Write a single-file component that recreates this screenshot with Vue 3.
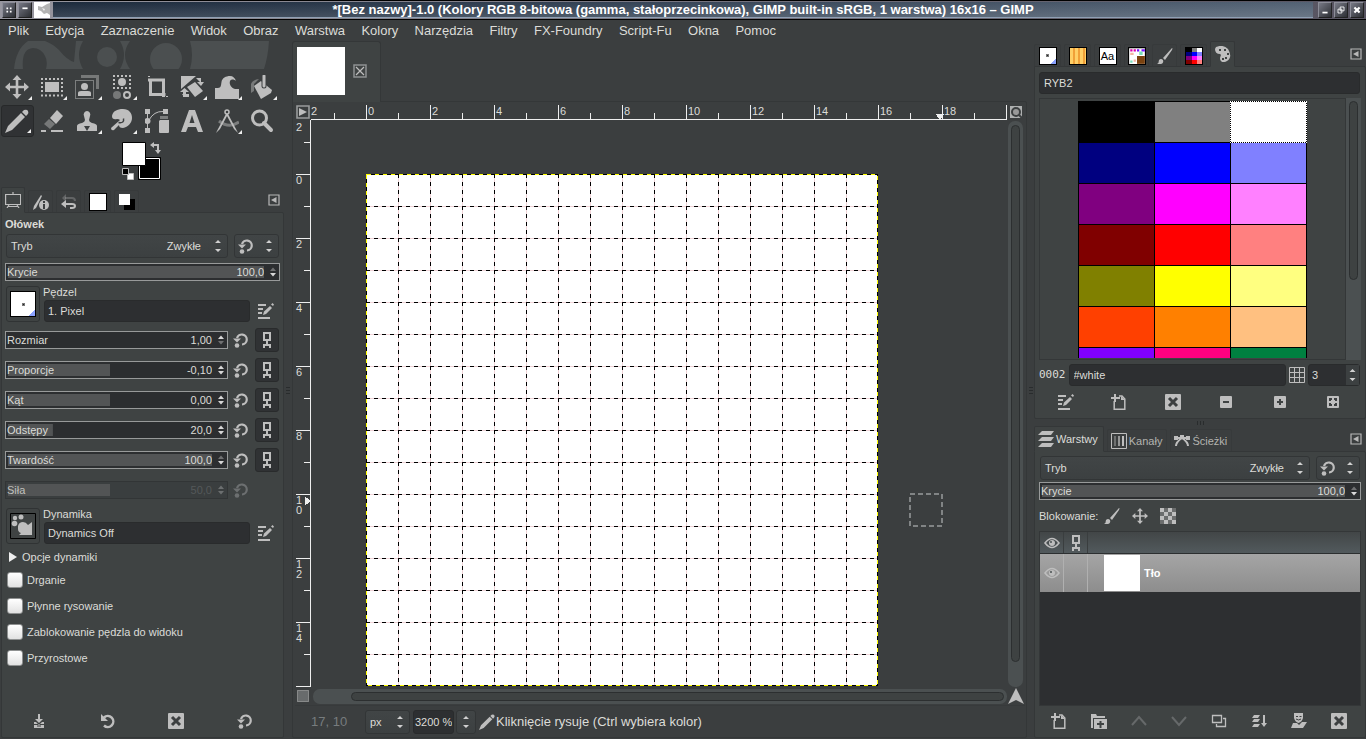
<script setup>
const menus = ['Plik', 'Edycja', 'Zaznaczenie', 'Widok', 'Obraz', 'Warstwa', 'Kolory', 'Narzędzia', 'Filtry', 'FX-Foundry', 'Script-Fu', 'Okna', 'Pomoc']

const tools = [
  { id: 'move', name: 'Przesunięcie', more: true },
  { id: 'rect', name: 'Zaznaczenie prostokątne', more: true },
  { id: 'fore', name: 'Zaznaczenie pierwszoplanowe', more: true },
  { id: 'bycolor', name: 'Zaznaczenie według koloru', more: true },
  { id: 'crop', name: 'Kadrowanie', more: false },
  { id: 'transform', name: 'Przekształcenie', more: true },
  { id: 'warp', name: 'Wypaczanie', more: true },
  { id: 'bucket', name: 'Wypełnienie kubełkiem', more: true },
  { id: 'pencil', name: 'Ołówek', more: true, active: true },
  { id: 'eraser', name: 'Gumka', more: false },
  { id: 'clone', name: 'Klonowanie', more: true },
  { id: 'smudge', name: 'Rozsmarowywanie', more: true },
  { id: 'paths', name: 'Ścieżki', more: false },
  { id: 'text', name: 'Tekst', more: false },
  { id: 'measure', name: 'Miarka', more: true },
  { id: 'zoom', name: 'Powiększenie', more: false },
]

const sliders = [
  { id: 'size', name: 'Rozmiar', value: '1,00', fill: 0, dim: 'dimdown' },
  { id: 'aspect', name: 'Proporcje', value: '-0,10', fill: 50 },
  { id: 'angle', name: 'Kąt', value: '0,00', fill: 50 },
  { id: 'spacing', name: 'Odstępy', value: '20,0', fill: 22 },
  { id: 'hardness', name: 'Twardość', value: '100,0', fill: 100, dim: 'dimup' },
  { id: 'force', name: 'Siła', value: '50,0', fill: 50, disabled: true },
]

const checks = ['Drganie', 'Płynne rysowanie', 'Zablokowanie pędzla do widoku', 'Przyrostowe']

const swatches = [
  '#000000', '#808080', '#ffffff', '#000080', '#0000ff', '#8080ff', '#800080', '#ff00ff', '#ff80ff',
  '#800000', '#ff0000', '#ff8080', '#808000', '#ffff00', '#ffff80', '#ff4000', '#ff8000', '#ffc080',
  '#8000ff', '#ff0080', '#008040',
]

const leftFooter = ['save', 'revert', 'delete', 'reset']
const paletteFooter = ['edit', 'new', 'delete', 'minus', 'plus', 'fit']
const layerFooter = ['new', 'folder', 'up', 'down', 'duplicate', 'merge', 'mask', 'delete']

const cell = 32
const originX = 55
const originY = 54
const hTicks = Array.from({ length: 22 }, (_, i) => i - 1)
const vTicks = Array.from({ length: 18 }, (_, i) => i - 1)
const hLabels = [0, 2, 4, 6, 8, 10, 12, 14, 16, 18]
const vLabels = [0, 2, 4, 6, 8, 10, 12, 14]
const inner = Array.from({ length: 15 }, (_, i) => i + 1)
</script>

<template>
  <svg class="defs" aria-hidden="true">
    <symbol id="move" viewBox="0 0 24 24"><path d="M12 0l4.500 5H13.300v5.700H19V7.500l5 4.500-5 4.500v-3.200h-5.700V19h3.200L12 24l-4.500-5h3.200v-5.700H5v3.200L0 12l5-4.500v3.200h5.700V5H7.500z" /></symbol>
    <symbol id="rect" viewBox="0 0 24 24"><path d="M5 7h14v10H5z" /><path d="M1 4h22M1 20.500h22" stroke="currentColor" stroke-width="2" stroke-dasharray="2 2" fill="none" /><path d="M2 7v12M22 7v12" stroke="currentColor" stroke-width="2" stroke-dasharray="2 2" fill="none" /></symbol>
    <symbol id="fore" viewBox="0 0 24 24"><path d="M6 0h18v14h-3V3H6z" opacity=".45" /><rect x="0.500" y="5.500" width="18" height="18" fill="none" stroke="currentColor" stroke-dasharray="1 1" /><circle cx="9.500" cy="11.500" r="3.500" /><path d="M3 21v-3q0-2 3-2h7q3 0 3 2v3z" /></symbol>
    <symbol id="bycolor" viewBox="0 0 24 24"><path d="M3 1h18M3 13h18M4 4v8M20 4v8" fill="none" stroke="currentColor" stroke-width="2" stroke-dasharray="2 2" /><circle cx="12" cy="7" r="4" /><circle cx="7" cy="20" r="4" opacity=".45" /><circle cx="17" cy="20" r="3" fill="none" stroke="currentColor" stroke-width="2" /></symbol>
    <symbol id="crop" viewBox="0 0 24 24"><path d="M3 5h15.500v17M5.500 5v14.500h15" fill="none" stroke="currentColor" stroke-width="3" /><path d="M3 1h2v1H3zM21 21h2v1h-2z" /></symbol>
    <symbol id="transform" viewBox="0 0 24 24"><path d="M1 1h15L1 14zM7 12l8-5 8 9-8 6z" /><path d="M16 3h5v5M3 22v-5h-3l4.500-4L9 17H6v5" /><path d="M17 7h7l-3 4zM2 19h7v3H4z" /></symbol>
    <symbol id="warp" viewBox="0 0 24 24"><path d="M0 24V13h3c3 0 3-3 3.500-6C7 3 11 1 15 1c3 0 5 2 6 5-2-2-5-2-6 0-1 3 1 7 5 8h4v10z" /></symbol>
    <symbol id="bucket" viewBox="0 0 24 24"><path d="M1 18V9q1-4 8-5L4 9v7z" opacity=".45" /><path d="M11 6l11 9-1 3-10 6L4 11z" /><path d="M14 1v10" stroke="#3c3f40" stroke-width="5" stroke-linecap="round" /><path d="M14 1v10" stroke="currentColor" stroke-width="3" stroke-linecap="round" /></symbol>
    <symbol id="pencil" viewBox="0 0 24 24"><path d="M0 24l3-7L16 4l4 4L7 21zM17 3l2-2q3-1 4 1 1 2-.500 3.500L21 7z" /></symbol>
    <symbol id="eraser" viewBox="0 0 24 24"><path d="M17 1l6 6-7 8-6-6z" /><path d="M9 10l6 5-5 5-6-5z" opacity=".45" /><path d="M1 21h5v2H1zM11 21h12v2H11z" /></symbol>
    <symbol id="clone" viewBox="0 0 24 24"><path d="M12 2a3.500 3.500 0 0 1 3 5l-1 4q0 2 3 3 5 1 5 3v5H2v-5q0-2 5-3 3-1 3-3L9 7a3.500 3.500 0 0 1 3-5z" /><path d="M9 17h6l-3 5z" fill="#3c3f40" /></symbol>
    <symbol id="smudge" viewBox="0 0 24 24"><path d="M2 7C3 2 7 0 13 0c6 0 9 4 9 9 0 5-4 9-9 10-3 0-4-1-4-3l-5 5q-3 1-3-2l9-8q-1-1-3-1-5 1-5-3z" /><path d="M8.500 13.500q6 1 5-4" fill="none" stroke="#3c3f40" stroke-width="1.500" /></symbol>
    <symbol id="paths" viewBox="0 0 24 24"><path d="M0 0h5v5H0zM0 19h5v5H0zM18 0h5v5h-5zM15 11h9v12q0 1-1 1h-8q-1 0-1-1V12z" /><circle cx="2.500" cy="12" r="3" /><path d="M2.500 3v18M4 11Q9 2 18 2.500" fill="none" stroke="currentColor" /><path d="M15 7h8v3h-8z" opacity=".5" /></symbol>
    <symbol id="text" viewBox="0 0 24 24"><path fill-rule="evenodd" d="M1 23L9 1h6l8 22h-5l-2-5H8l-2 5zM9.500 14h5L12 6z" /></symbol>
    <symbol id="measure" viewBox="0 0 24 24"><circle cx="12" cy="3" r="2" fill="none" stroke="currentColor" stroke-width="1.500" /><path d="M11 5L3 20l-2 4 4-4 7-13 7 13 4 4-2-4-8-15z" /><path d="M4 12q10 8 20 1" fill="none" stroke="currentColor" stroke-width="3" opacity=".5" /></symbol>
    <symbol id="zoom" viewBox="0 0 24 24"><circle cx="9.500" cy="9" r="7" fill="none" stroke="currentColor" stroke-width="3" /><path d="M14 14l7 7" stroke="currentColor" stroke-width="4" stroke-linecap="round" /></symbol>
    <symbol id="reset" viewBox="0 0 16 16"><path d="M4 6A5 5 0 1 1 9 12.500" fill="none" stroke="currentColor" stroke-width="2.200" /><path d="M0 6.500h8L4 10.500z" /><circle cx="4" cy="13.500" r="2.300" /></symbol>
    <symbol id="revert" viewBox="0 0 16 16"><path d="M4 4.500A5.500 5.500 0 1 1 4 12.500" fill="none" stroke="currentColor" stroke-width="2.500" /><path d="M1 1v7h7z" /></symbol>
    <symbol id="save" viewBox="0 0 16 16"><path d="M7 1h2v5h3L8 10 4 6h3zM3 9h2l3 3 3-3h2v2H3zM3 12h10v3H3z" /><path d="M6 12.500h4v1H6z" fill="#3c3f40" /></symbol>
    <symbol id="delete" viewBox="0 0 16 16"><rect width="16" height="16" rx="1" /><path d="M4 4l8 8M12 4l-8 8" stroke="#3c3f40" stroke-width="3" /></symbol>
    <symbol id="chain" viewBox="0 0 16 16"><path d="M5 1h6v7H5zM8 8v4M5 16v-3h6v3" fill="none" stroke="currentColor" stroke-width="2" /></symbol>
    <symbol id="edit" viewBox="0 0 16 16"><path d="M0 1h8v2H0zM0 5h5v2H0zM0 9h4v2H0zM0 14h12v2H0zM5 12l1-3.500L12 3l2 2-6 6zM13 1.500L14.500 0 16 1.500 15 3z" /></symbol>
    <symbol id="new" viewBox="0 0 16 16"><path d="M3.200 7v8.200h10.600V5L11 2H8" fill="none" stroke="currentColor" stroke-width="1.500" /><path d="M3 0h2v3h4v2H5v3H3V5H0V3h3zM10 2l4 4h-4z" /></symbol>
    <symbol id="minus" viewBox="0 0 16 16"><path fill-rule="evenodd" d="M3 2h10q1 0 1 1v10q0 1-1 1H3q-1 0-1-1V3q0-1 1-1zM5 7v2h6V7z" /></symbol>
    <symbol id="plus" viewBox="0 0 16 16"><path fill-rule="evenodd" d="M3 2h10q1 0 1 1v10q0 1-1 1H3q-1 0-1-1V3q0-1 1-1zM7 5v2H5v2h2v2h2V9h2V7H9V5z" /></symbol>
    <symbol id="fit" viewBox="0 0 16 16"><rect x="2" y="2" width="12" height="12" rx="1" /><path d="M4 4h3v2H6v1H4zM9 4h3v3h-2V6H9zM4 9h2v1h1v2H4zM10 9h2v3H9v-2h1z" fill="#3c3f40" /></symbol>
    <symbol id="folder" viewBox="0 0 16 16"><path fill-rule="evenodd" d="M0 1h5l1 2h8v2H2v10H0zM3 6h13v10H3zM8.500 8v2H6v2h2.500v3h2v-3H13v-2h-2.500V8z" /></symbol>
    <symbol id="up" viewBox="0 0 16 16"><path d="M1 12l7-8 7 8" fill="none" stroke="#66696a" stroke-width="2" /></symbol>
    <symbol id="down" viewBox="0 0 16 16"><path d="M1 4l7 8 7-8" fill="none" stroke="#66696a" stroke-width="2" /></symbol>
    <symbol id="duplicate" viewBox="0 0 16 16"><path d="M1.500 2.500h9v7h-9zM12 5.500h2.500v8h-9V11" fill="none" stroke="currentColor" stroke-width="1.300" /></symbol>
    <symbol id="merge" viewBox="0 0 16 16"><path d="M3 2h6L7 5H1zM3 6h6L7 9H1zM3 11h6l-2 3H1zM12 2h2v8h2l-3 4-3-4h2z" /></symbol>
    <symbol id="mask" viewBox="0 0 16 16"><path d="M3 0h9v5q-1 4-4.500 5Q4 9 3 5zM2 10h4l2 2 3-3h5l-4 6H0z" /><path d="M5 3.500h2M8.500 3.500h2M5 6q2.500 2 5 0" stroke="#3c3f40" fill="none" /></symbol>
    <symbol id="brush" viewBox="0 0 16 16"><path d="M0 16q2-1 2-4 2-2 4 0 1 3-2 4zM6 10l9-10q1 0 0 2L8 12z" /></symbol>
    <symbol id="palette" viewBox="0 0 16 16"><path fill-rule="evenodd" d="M1 1q7-3 12 2 5 8-1 12-6 3-7-2c0-3 2-4 0-5Q0 8 0 3zM4 3v2h2V3zM9 3v2h2V3zM12 7v2h2V7zM10 11v2h2v-2zM7 12v2h2v-2z" /></symbol>
    <symbol id="toolopts" viewBox="0 0 16 16"><path d="M.600 2.500h15v10H.600zM8 0v2M4 13l-2 3M12 13l2 3M3 14.500h10" fill="none" stroke="currentColor" stroke-width="1.200" /></symbol>
    <symbol id="device" viewBox="0 0 16 16"><path d="M0 16l1-4L8 1l1 1-6 12z" /><circle cx="11" cy="11" r="5" /><path d="M10 7h2v2h-2zM10 10h2v5h-2z" fill="#3c3f40" /></symbol>
    <symbol id="undo" viewBox="0 0 16 16"><path d="M4 4h7q3 0 3 3" stroke="currentColor" stroke-width="2" fill="none" opacity=".3" /><path d="M5 0v8L1 4z" opacity=".3" /><path d="M5 6v8L0 10zM4 9h7q4 0 4 3t-4 3H9v-2h2q2 0 2-1t-2-1H4z" /></symbol>
    <symbol id="layers" viewBox="0 0 16 16"><path d="M4 0h12l-3 4H0zM4 6h12l-3 4H0zM4 12h12l-3 4H0z" /></symbol>
    <symbol id="channels" viewBox="0 0 16 16"><path d="M.500.500h15v15H.500z" fill="none" stroke="currentColor" /><path d="M3 3h2v10H3z" opacity=".4" /><path d="M7 3h2v10H7z" opacity=".7" /><path d="M11 3h2v10h-2z" /></symbol>
    <symbol id="vectors" viewBox="0 0 16 16"><path d="M0 3h4v4H0zM12 3h4v4h-4zM6 2h4v4H6z" /><path d="M0 5h16M2 13q0-4 6-8 6 4 6 8" fill="none" stroke="currentColor" stroke-width="2" /></symbol>
    <symbol id="eye" viewBox="0 0 16 16"><path d="M1 8q7-9 14 0-7 9-14 0z" fill="none" stroke="currentColor" stroke-width="1.600" /><circle cx="8" cy="8" r="3" /><circle cx="7" cy="7" r="1" fill="#4a5052" /></symbol>
    <symbol id="checker" viewBox="0 0 16 16"><path d="M0 0h16v16H0z" opacity=".35" /><path d="M0 0h4v4H0zM8 0h4v4H8zM4 4h4v4H4zM12 4h4v4h-4zM0 8h4v4H0zM8 8h4v4H8zM4 12h4v4H4zM12 12h4v4h-4z" /></symbol>
    <symbol id="table" viewBox="0 0 16 16"><path d="M.500.500h15v15H.500zM5.500 0v16M10.500 0v16M0 5.500h16M0 10.500h16" fill="none" stroke="currentColor" /></symbol>
    <symbol id="arrows" viewBox="0 0 8 14"><path d="M1 4l3-3 3 3zM1 10h6l-3 3z" /></symbol>
    <symbol id="steps" viewBox="0 0 8 12"><path class="stepup" d="M1 5l3-3.500L7 5z" /><path class="stepdown" d="M1 7h6l-3 3.500z" /></symbol>
    <symbol id="tabmenu" viewBox="0 0 12 12"><path d="M1 1h10v10H1z" fill="none" stroke="currentColor" stroke-width="1.200" /><path d="M8.500 3v6L3 6z" /></symbol>
  </svg>

  <div class="gimp">
    <header class="title">
      <div class="wm"><button aria-label="Menu okna"><svg viewBox="0 0 14 14"><path d="M4 4h2v2H4zM8 4h2v2H8zM4 8h2v2H4zM8 8h2v2H8z" /></svg></button><button aria-label="Zwiń"><svg viewBox="0 0 14 14"><path d="M4 4h6v2H4z" /></svg></button><svg class="wilber" viewBox="0 0 16 16"><path d="M0 0h16v16H0z" fill="#fff" /><path d="M4 4l4 1 5-3 3-1v12l-3-2-3 1-3-3-3-1z" fill="#b4b4b4" /><path d="M8 6l3 1-1 2z" fill="#eee" /></svg></div>
      <h1>*[Bez nazwy]-1.0 (Kolory RGB 8-bitowa (gamma, stałoprzecinkowa), GIMP built-in sRGB, 1 warstwa) 16x16 – GIMP</h1>
      <div class="wm end"><button aria-label="Minimalizuj"><svg viewBox="0 0 14 14"><path d="M4 9h6v2H4z" /></svg></button><button aria-label="Przywróć"><svg viewBox="0 0 14 14"><path d="M6 3.500h4.500V8H6zM3.500 6H8v4.500H3.500z" fill="none" stroke="#fff" /></svg></button><button aria-label="Zamknij"><svg viewBox="0 0 14 14"><path d="M4 4l6 6M10 4l-6 6" stroke="#fff" stroke-width="2.500" /></svg></button></div>
    </header>
    <nav class="menu"><button v-for="m in menus" :key="m">{{ m }}</button></nav>

    <main class="body">
      <section class="dock left">
        <svg class="banner" viewBox="0 0 284 28" aria-hidden="true">
          <path d="M14 28Q16 8 28 0h17q8 3 14 9 8 10 15 12l2-21h7q-8 14 0 28H46q2-8-1-13-4-8-12-8-12 1-10 21zM120 0h10q-10 14 0 28h-10q8-14 0-28zM190 0h79q-1 16-5 28h-74q4-14 0-28z" />
          <circle cx="107" cy="16" r="10" /><circle cx="166" cy="18" r="16" />
        </svg>
        <div class="tools">
          <button v-for="t in tools" :key="t.id" class="tool" :class="{ active: t.active, more: t.more }" :aria-label="t.name"><svg class="i24"><use :href="'#' + t.id" /></svg></button>
        </div>
        <div class="colors">
          <svg viewBox="0 0 40 40" role="img" aria-label="Kolory pierwszego planu i tła">
            <path d="M16.500 15.500h22v22h-22z" fill="#000" stroke="#000" /><path d="M17.500 16.500h20v20h-20z" fill="#000" stroke="#fff" />
            <path d="M.500.500h23v23H.500z" fill="#fff" stroke="#000" />
            <path d="M5.500 31.500h6v6h-6z" fill="#fff" stroke="#bbb" /><path d="M.500 26.500h6v6h-6z" fill="#000" stroke="#bbb" />
            <path d="M28 3l4-3v2h5v6h2l-3 4-3-4h2V4h-3v2z" fill="#bebebe" />
          </svg>
        </div>
        <div class="tabs">
          <button class="tab on" aria-label="Opcje narzędzia"><svg class="i16"><use href="#toolopts" /></svg></button>
          <button class="tab" aria-label="Stan urządzeń"><svg class="i16"><use href="#device" /></svg></button>
          <button class="tab" aria-label="Historia"><svg class="i16"><use href="#undo" /></svg></button>
          <button class="tab wide" aria-label="Obrazy"><span class="chip"></span></button>
          <button class="tab" aria-label="Kolory"><svg class="i16" viewBox="0 0 16 16"><path d="M5 5h11v11H5z" fill="#000" /><path d="M0 0h11v11H0z" fill="#fff" /></svg></button>
          <button class="tabmenu" aria-label="Menu karty"><svg><use href="#tabmenu" /></svg></button>
        </div>

        <div class="panel options">
          <h2>Ołówek</h2>
          <div class="moderow">
            <label class="combo"><span>Tryb</span><select><option>Zwykłe</option></select><svg class="ud"><use href="#arrows" /></svg></label>
            <button class="combo small" aria-label="Przestrzeń mieszania"><svg class="i16"><use href="#reset" /></svg><svg class="ud"><use href="#arrows" /></svg></button>
          </div>
          <div class="scale full dimup"><div class="fill"></div><label for="opacity">Krycie</label><input id="opacity" value="100,0"><svg class="step"><use href="#steps" /></svg></div>
          <div class="resource">
            <button class="preview" aria-label="Wybierz pędzel"><span class="brushbox"><span class="dot"></span></span></button>
            <div class="resname"><label for="brushname">Pędzel</label><input id="brushname" class="entry" value="1. Pixel"></div>
            <button class="flat" aria-label="Modyfikuj pędzel"><svg class="i16"><use href="#edit" /></svg></button>
          </div>
          <div class="sliders">
            <div v-for="s in sliders" :key="s.id" class="sliderrow" :class="{ off: s.disabled }">
              <div class="scale" :class="s.dim"><div class="fill" :style="{ '--part': s.fill + '%' }"></div><label :for="s.id">{{ s.name }}</label><input :id="s.id" :value="s.value" :disabled="s.disabled"><svg class="step"><use href="#steps" /></svg></div>
              <button class="flat" aria-label="Przywróć wartość"><svg class="i16"><use href="#reset" /></svg></button>
              <button v-if="!s.disabled" class="link" aria-label="Powiąż z pędzlem"><svg class="i16"><use href="#chain" /></svg></button>
            </div>
          </div>
          <div class="resource">
            <button class="preview" aria-label="Wybierz dynamikę"><svg class="dyn" viewBox="0 0 26 26"><path d="M.500.500h25v25H.500z" fill="none" stroke="#000" /><path d="M22 9v13H9l2-2q-3-1-3-4v-3q1-4 5-4 3 0 5 3z" /><circle cx="5" cy="5" r="2.200" /><circle cx="11" cy="4" r="2.500" /><circle cx="4.500" cy="10.500" r="2.800" /></svg></button>
            <div class="resname"><label for="dynname">Dynamika</label><input id="dynname" class="entry" value="Dynamics Off"></div>
            <button class="flat" aria-label="Modyfikuj dynamikę"><svg class="i16"><use href="#edit" /></svg></button>
          </div>
          <button class="expander"><svg viewBox="0 0 10 10"><path d="M1 0v10l8-5z" fill="#eee" /></svg>Opcje dynamiki</button>
          <div class="checks"><label v-for="c in checks" :key="c"><input type="checkbox">{{ c }}</label></div>
          <footer class="foot"><button v-for="f in leftFooter" :key="f" :aria-label="f"><svg class="i16"><use :href="'#' + f" /></svg></button></footer>
        </div>
      </section>

      <div class="sash wider"><span></span></div>

      <section class="center">
        <div class="imagetab"><span class="thumb"></span><button aria-label="Zamknij obraz"><svg viewBox="0 0 14 14"><path d="M1 1h12v12H1z" fill="none" stroke="#8f9192" stroke-width="1.500" /><path d="M3 3l8 8M11 3l-8 8" stroke="#bebebe" stroke-width="1.200" /></svg></button></div>
        <div class="panel view">
          <div class="stage">
            <button class="corner" aria-label="Menu obrazu"><svg viewBox="0 0 14 14"><path d="M1 1h12v12H1z" fill="none" stroke="#999b9c" stroke-width="1.600" /><path d="M3 3l8 4-8 4z" /></svg></button>
            <svg class="ruler">
              <path d="M0 15.500H2000" />
              <path v-for="t in hTicks" :key="t" :d="`M${originX + t * cell + 0.5} ${t % 2 ? 9 : 1}V16`" />
              <text x="0" y="11">2</text>
              <text v-for="n in hLabels" :key="n" :x="originX + n * cell + 2" y="11">{{ n }}</text>
              <path d="M625 10h8l-4 5z" fill="#eee" stroke="none" />
            </svg>
            <button class="corner" aria-label="Powiększanie z oknem"><svg viewBox="0 0 12 12"><path d="M0 0h12v12H0z" fill="#aeb0b0" /><circle cx="6" cy="6" r="4" fill="#999" stroke="#3c3f40" stroke-width="2" /><path d="M9 9l3 3" stroke="#3c3f40" stroke-width="2" /></svg></button>
            <svg class="ruler">
              <path d="M15.500 0V567" />
              <path v-for="t in vTicks" :key="t" :d="`M${t % 2 ? 9 : 1} ${originY + t * cell + 0.5}H16`" />
              <text x="1" y="11">2</text>
              <template v-for="n in vLabels" :key="n"><text v-for="(d, i) in String(n)" :key="i" x="1" :y="originY + n * cell + 10 + i * 10">{{ d }}</text></template>
              <path d="M10 377v8l5-4z" fill="#eee" stroke="none" />
            </svg>
            <svg class="canvas" role="img" aria-label="Obraz 16x16">
              <rect :x="originX" :y="originY" width="512" height="512" fill="#fff" />
              <g v-for="n in inner" :key="n">
                <path class="pink" :d="`M${originX} ${originY + n * cell + 0.5}h512M${originX + n * cell + 0.5} ${originY}v512`" />
                <path class="dash" :d="`M${originX} ${originY + n * cell + 0.5}h512M${originX + n * cell + 0.5} ${originY}v512`" />
              </g>
              <rect class="edge" :x="originX + 0.5" :y="originY + 0.5" width="511" height="511" />
              <rect class="edge yellow" :x="originX + 0.5" :y="originY + 0.5" width="511" height="511" />
              <rect class="cursor" x="599" y="374" width="32" height="32" />
            </svg>
            <div class="bar vbar"><div class="knob"></div></div>
            <button class="corner" aria-label="Szybka maska"><svg viewBox="0 0 12 12"><path d="M.500.500h11v11H.500z" fill="#686b6c" stroke="#bebebe" stroke-dasharray="1 1" /></svg></button>
            <div class="bar hbar"><div class="knob"></div></div>
            <button class="corner nav" aria-label="Nawigacja"><svg viewBox="0 0 16 16"><path d="M8 0l8 16-8-4-8 4z" /></svg></button>
          </div>
          <footer class="status">
            <span class="coords">17, 10</span>
            <label class="combo unit"><select aria-label="Jednostka"><option>px</option></select><svg class="ud"><use href="#arrows" /></svg></label>
            <input class="entry zoom" value="3200 %" aria-label="Powiększenie">
            <button class="combo zoomstep" aria-label="Lista powiększeń"><svg class="ud"><use href="#arrows" /></svg></button>
            <svg class="i16"><use href="#pencil" /></svg><span class="hint">Kliknięcie rysuje (Ctrl wybiera kolor)</span>
          </footer>
        </div>
      </section>

      <div class="sash"><span></span></div>

      <section class="dock right">
        <div class="tabs">
          <button class="tab wide" aria-label="Pędzle"><span class="chip brushchip"><span class="dot"></span></span></button>
          <button class="tab wide" aria-label="Desenie"><span class="chip wood"></span></button>
          <button class="tab wide" aria-label="Czcionki"><span class="chip font">Aa</span></button>
          <button class="tab" aria-label="Historia dokumentów"><svg class="chipsvg" viewBox="0 0 16 16"><path d="M.500.500h15v15H.500z" fill="#fff" stroke="#000" /><path d="M8 8h7v7H8z" fill="#7b4310" /><path d="M2 2h2v2H2zM5 2h2v2H5z" fill="#d0a" /><path d="M8 2h2v2H8zM12 2h3v2h-3z" fill="#71f" /><path d="M2 5h3v2H2zM5 11h2v2H5z" fill="#f4b6a0" /><path d="M10 4h3v3h-3zM2 12h2v2H2z" fill="#79e0bd" /></svg></button>
          <button class="tab" aria-label="Ustawienia narzędzi"><svg class="i16"><use href="#brush" /></svg></button>
          <button class="tab wide" aria-label="Palety"><svg class="chipsvg" viewBox="0 0 18 18"><path d="M0 0h18v18H0z" fill="#000" /><path d="M7 1h5v4H7z" fill="#808080" /><path d="M12 1h5v4h-5z" fill="#fff" /><path d="M1 5h6v4H1z" fill="#000080" /><path d="M7 5h5v4H7z" fill="#00f" /><path d="M12 5h5v4h-5z" fill="#8080ff" /><path d="M1 9h6v4H1z" fill="#800080" /><path d="M7 9h5v4H7z" fill="#f0f" /><path d="M12 9h5v4h-5z" fill="#ff80ff" /><path d="M1 13h6v4H1z" fill="#800000" /><path d="M7 13h5v4H7z" fill="#f00" /><path d="M12 13h5v4h-5z" fill="#ff8080" /></svg></button>
          <button class="tab on" aria-label="Edytor palet"><svg class="i16"><use href="#palette" /></svg></button>
          <button class="tabmenu" aria-label="Menu karty"><svg><use href="#tabmenu" /></svg></button>
        </div>
        <div class="panel palette">
          <input class="entry" value="RYB2" aria-label="Nazwa palety">
          <div class="scroll">
            <div class="swatchbox"><div class="swatches"><button v-for="(c, i) in swatches" :key="i" :class="{ sel: i === 2 }" :style="{ background: c }" :aria-label="c"></button></div></div>
            <div class="bar pbar"><div class="knob"></div></div>
          </div>
          <div class="colorrow">
            <label for="cname">0002</label><input id="cname" class="entry" value="#white">
            <svg class="i16"><use href="#table" /></svg>
            <span class="spin"><input value="3" aria-label="Kolumny"><svg class="ud"><use href="#arrows" /></svg></span>
          </div>
          <footer class="foot"><button v-for="f in paletteFooter" :key="f" :aria-label="f"><svg class="i16"><use :href="'#' + f" /></svg></button></footer>
        </div>
        <div class="hsash"><span></span></div>
        <div class="tabs named">
          <button class="tab on"><svg class="i16"><use href="#layers" /></svg>Warstwy</button>
          <button class="tab"><svg class="i16"><use href="#channels" /></svg>Kanały</button>
          <button class="tab"><svg class="i16"><use href="#vectors" /></svg>Ścieżki</button>
          <button class="tabmenu" aria-label="Menu karty"><svg><use href="#tabmenu" /></svg></button>
        </div>
        <div class="panel layers">
          <div class="moderow">
            <label class="combo"><span>Tryb</span><select><option>Zwykłe</option></select><svg class="ud"><use href="#arrows" /></svg></label>
            <button class="combo small" aria-label="Przestrzeń mieszania"><svg class="i16"><use href="#reset" /></svg><svg class="ud"><use href="#arrows" /></svg></button>
          </div>
          <div class="scale full dimup"><div class="fill"></div><label for="lopacity">Krycie</label><input id="lopacity" value="100,0"><svg class="step"><use href="#steps" /></svg></div>
          <div class="locks"><span>Blokowanie:</span><button aria-label="Zablokuj piksele"><svg class="i16"><use href="#brush" /></svg></button><button aria-label="Zablokuj położenie"><svg class="i16"><use href="#move" /></svg></button><button aria-label="Zablokuj kanał alfa"><svg class="i16"><use href="#checker" /></svg></button></div>
          <div class="tree">
            <div class="treehead"><span><svg class="i16"><use href="#eye" /></svg></span><span><svg class="i16"><use href="#chain" /></svg></span></div>
            <div class="treerow"><span><svg class="i16"><use href="#eye" /></svg></span><span></span><div class="layerthumb"></div><b>Tło</b></div>
          </div>
          <footer class="foot"><button v-for="f in layerFooter" :key="f" :aria-label="f"><svg class="i16"><use :href="'#' + f" /></svg></button></footer>
        </div>
      </section>
    </main>
  </div>
</template>

<style>
body { margin: 0; background: #3b3f40; }
</style>

<style scoped>
* { box-sizing: border-box; }
.defs { position: absolute; width: 0; height: 0; }
.gimp { height: 100vh; display: flex; flex-direction: column; overflow: hidden; background: #3b3e3f; color: #dcdcd8; font: 11px/14px "Liberation Sans", Arial, sans-serif; }
button, input, select { font: inherit; color: inherit; background: none; border: 0; padding: 0; margin: 0; min-width: 0; outline: 0; }
select { appearance: none; }
svg { display: block; fill: currentColor; flex: none; }
.i16 { width: 16px; height: 16px; color: #bebebe; }
.i24 { width: 24px; height: 24px; color: #bebebe; }
.ud { width: 8px; height: 14px; color: #d0d0d0; }
.step { width: 8px; height: 12px; color: #d8d8d8; }
.stepup { opacity: var(--up, 1); }
.stepdown { opacity: var(--down, 1); }
.dimup { --up: .4; }
.dimdown { --down: .4; }

.title { height: 20px; flex: none; display: flex; align-items: center; border-top: 1px solid #000; border-bottom: 1px solid #000; background: linear-gradient(90deg, #97969f, #565360); gap: 3px; padding: 0 2px; }
.title h1 { flex: 1; height: 16px; margin: 0; font: bold 13px/16px "Liberation Sans", Arial, sans-serif; color: #fff; text-align: center; background: linear-gradient(#0000, #fff2), linear-gradient(90deg, #1c2a3c, #536274); border-bottom: 1px solid #8fa0b4; white-space: nowrap; overflow: hidden; }
.wm { display: flex; gap: 2px; }
.wm.end { margin-left: 2px; }
.wm button { width: 14px; height: 16px; background: linear-gradient(135deg, #777985, #2c2e33); border: 1px solid #8c8d98; border-right-color: #222; border-bottom-color: #222; }
.wm button svg { width: 12px; height: 14px; fill: #fff; }
.wilber { width: 16px; height: 16px; }

.menu { height: 21px; width: 784px; flex: none; display: flex; justify-content: space-between; padding: 0 8px; font-size: 13px; line-height: 20px; }
.body { flex: 1; min-height: 0; display: flex; }
.dock { display: flex; flex-direction: column; flex: none; }
.left { width: 284px; padding: 0 0 1px 1px; }
.right { width: 332px; padding-bottom: 1px; }
.sash { width: 6px; flex: none; display: flex; align-items: center; justify-content: center; }
.wider { width: 7px; }
.sash span { width: 4px; height: 7px; background: repeating-linear-gradient(#292c2d 0 1px, transparent 1px 3px); }
.panel { background: #3f4343; border: 1px solid #343738; border-radius: 0 2px 2px 2px; }

.banner { width: 284px; height: 28px; fill: #4b4f50; margin: 0 0 1px -1px; }
.tools { display: grid; grid-template-columns: repeat(8, 35px); grid-auto-rows: 34px; }
.tool { position: relative; width: 33px; height: 32px; margin-top: 1px; padding: 4px; border-radius: 3px; }
.tool.active { background: #303234; border: 1px solid #27292a; padding: 3px; }
.tool.more::after { content: ""; position: absolute; right: 2px; bottom: 3px; border: 2px solid #eee; border-top-color: transparent; border-left-color: transparent; }
.colors { height: 49px; flex: none; padding: 4px 0 0 121px; }
.colors svg { width: 40px; height: 40px; }

.tabs { display: flex; gap: 3px; align-items: flex-end; height: 26px; flex: none; margin-bottom: -1px; }
.tab { display: flex; align-items: center; justify-content: center; width: 25px; height: 23px; border: 1px solid #373a3b; border-radius: 2px 2px 0 0; color: #b4b4b0; }
.tab.wide { width: 27px; }
.tab.on { height: 26px; background: #3f4343; border-color: #343738; border-bottom-color: #3f4343; color: #dcdcd8; position: relative; }
.left .tab.on { width: 24px; }
.chip { width: 18px; height: 18px; background: #fff; border: 1px solid #000; display: flex; align-items: center; justify-content: center; }
.chipsvg { width: 18px; height: 18px; }
.dot { width: 3px; height: 3px; background: #222; border: 1px solid #777; }
.brushchip { background: linear-gradient(135deg, #fff 84%, #8ba2ff 84%); }
.wood { background: repeating-linear-gradient(90deg, #ffcf66 0 3px, #f0a038 3px 5px); }
.font { color: #000; font-size: 11px; }
.tabmenu { margin: 0 4px 7px auto; }
.tabmenu svg { width: 12px; height: 12px; color: #b8b8b8; }

.options { flex: 1; display: flex; flex-direction: column; padding: 4px 4px 7px 3px; }
.options h2 { margin: 0 0 3px; font: bold 11px/14px "Liberation Sans", Arial, sans-serif; }
.moderow { display: flex; gap: 6px; padding: 0 0 0 1px; }
.combo { display: flex; align-items: center; height: 24px; border: 1px solid #323536; border-radius: 3px; padding: 0 5px 0 4px; background: linear-gradient(#414546, #3c4041); }
.moderow label { flex: 1; }
.combo select { flex: 1; text-align-last: right; margin-right: 13px; }
.small { width: 45px; justify-content: space-between; padding: 0 5px 0 3px; }
.scale { display: flex; position: relative; flex: 1; align-items: center; height: 18px; border: 1px solid #989a9a; background: #2c2e30; padding: 0 2px 0 1px; }
.full { flex: none; margin: 5px 0; }
.fill { --part: 100%; position: absolute; left: 2px; top: 2px; bottom: 2px; width: calc(100% - 17px); background: linear-gradient(#525455, #525455) left / var(--part) 100% no-repeat; }
.scale label, .scale input, .scale svg { position: relative; }
.scale input { flex: 1; width: 10px; text-align: right; margin-right: 5px; height: 14px; }
.options .full { margin-right: -1px; }
.resource { display: flex; align-items: flex-end; padding-left: 1px; }
.preview { width: 34px; height: 36px; padding: 3px; border: 1px solid #303334; border-radius: 3px; margin-right: 4px; }
.brushbox { width: 26px; height: 26px; border: 1px solid #000; background: linear-gradient(135deg, #fff 87%, #8ba2ff 87%); display: flex; align-items: center; justify-content: center; }
.dyn { width: 26px; height: 26px; color: #bebebe; }
.resname { flex: 1; display: flex; flex-direction: column; height: 36px; justify-content: space-between; }
.resname label { line-height: 13px; margin-left: -1px; }
.entry { height: 22px; background: #2d2f31; border: 1px solid #292b2c; border-radius: 3px; padding: 0 4px; }
.resname .entry { padding: 0 3px; }
.flat { width: 16px; }
.resource .flat { margin: 0 5px 3px 8px; }
.sliders { margin: 3px 0; }
.sliderrow { display: flex; align-items: center; height: 30px; }
.sliderrow .scale { flex: none; width: calc(100% - 51px); }
.sliderrow .flat { margin: 0 6px 0 5px; }
.link { width: 24px; height: 24px; border: 1px solid #292b2c; border-radius: 3px; background: #303234; padding: 3px; }
.off .scale { background: #3a3e3f; border-color: #323536; }
.off label { color: #c0c0bd; }
.off .step, .off .flat svg { color: #6c6f70; }
.off input { color: #55595a; }
.expander { display: flex; align-items: center; gap: 4px; text-align: left; margin: 6px 0 3px 3px; }
.expander svg { width: 10px; height: 10px; }
.checks label { display: flex; align-items: center; gap: 4px; height: 26px; padding-left: 2px; }
.checks input { appearance: none; width: 16px; height: 16px; border-radius: 3px; background: linear-gradient(#fff, #e2e2e2); border: 1px solid #8f9191; }
.foot { display: flex; margin-top: auto; height: 18px; align-items: center; }
.foot button { flex: 1; display: flex; justify-content: center; }

.center { flex: 1; min-width: 0; display: flex; flex-direction: column; padding: 0 1px 1px; }
.imagetab { width: 89px; height: 61px; flex: none; display: flex; align-items: center; border: 1px solid #343738; border-bottom: 0; margin-bottom: -1px; background: #3f4343; padding: 0 0 2px 4px; position: relative; gap: 8px; border-radius: 3px 3px 0 0; }
.thumb { width: 48px; height: 48px; background: #fff; }
.imagetab button svg { width: 14px; height: 14px; }
.view { flex: 1; min-height: 0; display: flex; flex-direction: column; background: #3b3e3f; padding: 2px 1px 0 2px; }
.stage { flex: 1; min-height: 0; display: grid; grid-template: 16px minmax(0, 1fr) 18px / 16px minmax(0, 1fr) 18px; }
.corner { display: flex; align-items: center; justify-content: center; color: #bebebe; }
.corner svg { width: 12px; height: 12px; }
.corner:first-child svg { width: 14px; height: 14px; }
.nav svg { width: 16px; height: 16px; }
.ruler { width: 100%; height: 100%; overflow: hidden; }
.ruler path { stroke: #eee; shape-rendering: crispEdges; }
.ruler text { font-size: 11px; }
.canvas { width: 100%; height: 100%; shape-rendering: crispEdges; }
.pink { stroke: #f0d4d8; }
.dash { stroke: #000; stroke-dasharray: 4 4; }
.edge { fill: none; stroke: #000; }
.yellow { stroke: #ff0; stroke-dasharray: 4 4; }
.cursor { fill: none; stroke: #818485; stroke-width: 2; stroke-dasharray: 5 3; }
.bar { border-radius: 7px; background: #4b5051; padding: 3px; }
.knob { border: 1px solid #2c2f30; border-radius: 5px; background: #3e4242; }
.vbar { margin: 1px 2px 0 1px; padding-top: 4px; }
.vbar .knob { height: 96%; }
.hbar { margin: 2px 0 1px 2px; }
.hbar .knob { height: 9px; margin-left: 35px; }
.status { height: 32px; flex: none; display: flex; align-items: center; font-size: 13px; border-top: 1px solid #373a3b; padding: 0 0 0 16px; }
.coords { width: 54px; color: #777c7e; }
.unit { width: 45px; font-size: 11px; margin-right: 3px; }
.unit select { margin: 0; text-align-last: left; }
.zoom { width: 41px; height: 24px; font-size: 11px; padding: 0 1px; margin-right: 2px; }
.zoomstep { width: 20px; margin-right: 3px; justify-content: center; }
.hint { margin-left: 1px; }

.palette { height: 353px; flex: none; display: flex; flex-direction: column; padding: 5px 5px 7px 4px; }
.palette > .entry { margin-bottom: 4px; }
.scroll { display: flex; height: 262px; margin-right: -1px; }
.swatchbox { flex: 1; border: 1px solid #343738; padding: 2px 0 1px; }
.swatches { display: grid; grid-template-columns: repeat(3, 75px); grid-auto-rows: 40px; gap: 1px; padding: 1px 1px 0; width: 229px; height: 257px; overflow: hidden; margin: 0 auto; background: #000; }
.swatches .sel { outline: 1px dotted #fff; }
.pbar { width: 15px; border-radius: 0; }
.pbar .knob { height: 70%; }
.colorrow { display: flex; align-items: center; margin: 4px 0; gap: 3px; }
.colorrow label { font: 11px/14px "DejaVu Sans Mono", monospace; }
.colorrow .entry { flex: 1; }
.spin { display: flex; align-items: center; width: 52px; height: 22px; border: 1px solid #292b2c; border-radius: 3px; background: #2d2f31; padding-left: 3px; }
.spin input { flex: 1; }
.spin .ud { width: 13px; padding: 3px 2px; height: 20px; background: #3c4041; }
.palette .foot { margin-top: 3px; }
.hsash { height: 7px; flex: none; display: flex; justify-content: center; align-items: center; }
.hsash span { width: 7px; height: 4px; background: repeating-linear-gradient(90deg, #292c2d 0 1px, transparent 1px 3px); }
.named .tab { width: auto; padding: 0 4px 0 3px; gap: 2px; }
.named .on { padding-right: 5px; }
.layers { flex: 1; min-height: 0; display: flex; flex-direction: column; padding: 4px 4px 7px; }
.layers .full { margin: 2px 0 7px; }
.layers .moderow { padding-right: 1px; }
.layers .small { width: 44px; }
.layers .combo select { margin-right: 12px; }
.locks { display: flex; align-items: center; gap: 12px; height: 18px; margin-bottom: 6px; }
.locks span { margin-right: -6px; }
.tree { flex: 1; background: #2d2f31; border: 1px solid #343738; margin-bottom: 6px; }
.treehead { height: 22px; display: flex; background: linear-gradient(#424647, #525a5d); border-bottom: 1px solid #2c2f30; }
.treehead span, .treerow > span { width: 24px; border-right: 1px solid #3a3e3f; display: flex; align-items: center; justify-content: center; }
.treerow { height: 38px; display: flex; align-items: center; background: linear-gradient(#a5a5a5, #8d8d8d); color: #fff; }
.treerow > span { height: 38px; border-color: #b0b0b0; }
.layerthumb { width: 36px; height: 36px; background: #fff; margin: 0 4px 0 16px; }
.layers .foot { margin-right: 2px; }
</style>
